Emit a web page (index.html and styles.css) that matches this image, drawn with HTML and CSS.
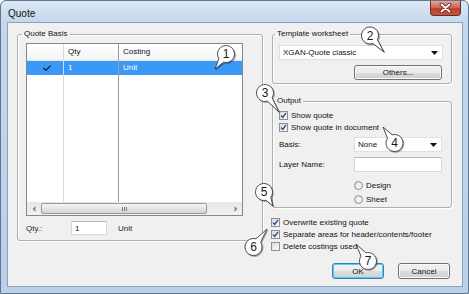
FILE: index.html
```html
<!DOCTYPE html>
<html lang="en">
<head>
    <meta charset="UTF-8">
    <title>Quote</title>
    <link rel="stylesheet" href="styles.css">
</head>
<body>
    <div class="window">
        <div class="titlebar">
            <span class="title">Quote</span>
            <div class="close">
                <svg width="13" height="10" viewBox="0 0 13 10">
                    <path d="M2.5 1.5 L10.5 8.5 M10.5 1.5 L2.5 8.5" stroke="#5a1e14" stroke-width="3.6" stroke-linecap="round"/>
                    <path d="M2.5 1.5 L10.5 8.5 M10.5 1.5 L2.5 8.5" stroke="#fff" stroke-width="2" stroke-linecap="round"/>
                </svg>
            </div>
        </div>

        <div class="client">
            <fieldset class="group basis">
                <legend>Quote Basis</legend>
                <div class="list">
                    <div class="cols">
                        <div class="col col0">
                            <div class="head"></div>
                            <div class="cell sel check-cell">
                                <svg width="8" height="6" viewBox="0 0 8 6"><path d="M0.5 3 L3 5.3 L7.5 0.6" fill="none" stroke="#111" stroke-width="1.1"/></svg>
                            </div>
                        </div>
                        <div class="col col1">
                            <div class="head">Qty</div>
                            <div class="cell sel">1</div>
                        </div>
                        <div class="col col2">
                            <div class="head">Costing</div>
                            <div class="cell sel">Unit</div>
                        </div>
                    </div>
                    <div class="hscroll">
                        <div class="arrow">
                            <svg width="4" height="6" viewBox="0 0 4 6"><path d="M3.5 0 L0.5 3 L3.5 6 Z" fill="#8a8a8a"/></svg>
                        </div>
                        <div class="thumb"><span class="grip"></span></div>
                        <div class="track"></div>
                        <div class="arrow">
                            <svg width="4" height="6" viewBox="0 0 4 6"><path d="M0.5 0 L3.5 3 L0.5 6 Z" fill="#8a8a8a"/></svg>
                        </div>
                    </div>
                </div>
                <div class="qty-row">
                    <span class="qty-label">Qty.:</span>
                    <input class="field qty-input" type="text" value="1">
                    <span class="qty-unit">Unit</span>
                </div>
            </fieldset>

            <div class="side">
                <fieldset class="group template">
                    <legend>Template worksheet</legend>
                    <div class="combo wide">
                        <span>XGAN-Quote classic</span>
                        <svg width="7" height="4" viewBox="0 0 7 4"><path d="M0 0 H7 L3.5 4 Z" fill="#111"/></svg>
                    </div>
                    <button class="btn others">Others...</button>
                </fieldset>

                <fieldset class="group output">
                    <legend>Output</legend>
                    <label class="check"><span class="box on"></span>Show quote</label>
                    <label class="check"><span class="box on"></span>Show quote in document</label>
                    <div class="form-row basis-row">
                        <span class="form-label">Basis:</span>
                        <div class="combo">
                            <span>None</span>
                            <svg width="7" height="4" viewBox="0 0 7 4"><path d="M0 0 H7 L3.5 4 Z" fill="#111"/></svg>
                        </div>
                    </div>
                    <div class="form-row layer-row">
                        <span class="form-label">Layer Name:</span>
                        <input class="field layer-input" type="text" value="">
                    </div>
                    <div class="radios">
                        <label class="radio"><span class="dot"></span>Design</label>
                        <label class="radio"><span class="dot"></span>Sheet</label>
                    </div>
                </fieldset>

                <div class="options">
                    <label class="check"><span class="box on"></span>Overwrite existing quote</label>
                    <label class="check"><span class="box on"></span>Separate areas for header/contents/footer</label>
                    <label class="check"><span class="box"></span>Delete costings used</label>
                </div>

                <div class="buttons">
                    <button class="btn default">OK</button>
                    <button class="btn">Cancel</button>
                </div>
            </div>
        </div>

        <!-- numbered callouts drawn over the dialog -->
        <svg class="callouts" width="469" height="294" viewBox="0 0 469 294">
            <g class="bubble">
                <path d="M218.9 58.7 A8.5 8.5 0 1 1 223.6 62.2 L215 69 Z"/>
                <text x="226" y="58.3">1</text>
            </g>
            <g class="bubble">
                <path d="M372.95 43.47 A8.5 8.5 0 1 1 377.38 39.71 L384 52 Z"/>
                <text x="370" y="39.8">2</text>
            </g>
            <g class="bubble">
                <path d="M267.4 101.15 A8.5 8.5 0 1 1 272.08 97.7 L279 112 Z"/>
                <text x="265" y="97.3">3</text>
            </g>
            <g class="bubble">
                <path d="M392.2 134.82 A8.5 8.5 0 1 1 387.48 138.21 L383 127 Z"/>
                <text x="394.5" y="147.3">4</text>
            </g>
            <g class="bubble">
                <path d="M265.87 200.29 A8.5 8.5 0 1 1 270.76 197.15 L273 206 Z"/>
                <text x="264" y="196.3">5</text>
            </g>
            <g class="bubble">
                <path d="M260.62 242.36 A8.5 8.5 0 1 1 255.97 238.87 L267 229 Z"/>
                <text x="253.5" y="251.3">6</text>
            </g>
            <g class="bubble">
                <path d="M365.77 252.8 A8.5 8.5 0 1 1 361.02 256.15 L356 244 Z"/>
                <text x="368" y="265.3">7</text>
            </g>
        </svg>
    </div>
</body>
</html>
```

FILE: styles.css
```css
body {
    margin: 0;
    font-family: "Liberation Sans", Arial, sans-serif;
    font-size: 8px;
    color: #111;
}
.window {
    position: relative;
    width: 469px;
    height: 294px;
    box-sizing: border-box;
    border: 1px solid #61768f;
    border-radius: 6px 6px 0 0;
    background: linear-gradient(#dbe7f4, #c4d7ed 22px, #bad0e9);
    padding: 0 5px 6px 6px;
    display: flex;
    flex-direction: column;
}
.titlebar {
    height: 21px;
    display: flex;
    align-items: flex-start;
    padding-left: 1px;
}
.title {
    font-size: 10px;
    line-height: 12px;
    margin-top: 7px;
    color: #111;
}
.close {
    margin-left: auto;
    margin-right: 2px;
    width: 31px;
    height: 15px;
    box-sizing: border-box;
    border: 1px solid #6e2a20;
    border-top: none;
    border-radius: 0 0 4px 4px;
    background: linear-gradient(#e3a396, #cf6a56 45%, #b8402b 55%, #c9553f);
    display: flex;
    align-items: center;
    justify-content: center;
}

.client {
    flex: 1;
    border: 1px solid #8aa0bd;
    background: #f0f0f0;
    display: grid;
    grid-template-columns: 246px 180px;
    column-gap: 9px;
    align-items: start;
    padding: 6px 0 0 9px;
}

/* group boxes */
.group {
    margin: 0;
    min-width: 0;
    box-sizing: border-box;
    border: 1px solid #a9afb6;
    border-radius: 3px;
    box-shadow: 1px 1px 0 #fff, inset 1px 1px 0 #fff;
}
.group legend {
    padding: 0 2px;
    margin-left: -4px;
    line-height: 10px;
    font-size: 8px;
}
.basis {
    height: 212px;
    padding: 4px 8px 0 8px;
}
.template {
    height: 55px;
    padding: 6px 8px 0 6px;
    display: flex;
    flex-direction: column;
}
.output {
    height: 112px;
    margin-top: 12px;
    padding: 3px 8px 0 6px;
}

/* list view */
.list {
    width: 217px;
    height: 173px;
    box-sizing: border-box;
    border: 1px solid #828790;
    background: #fff;
    display: flex;
    flex-direction: column;
}
.cols {
    flex: 1;
    display: flex;
}
.col {
    display: flex;
    flex-direction: column;
}
.col0 {
    width: 36px;
    border-right: 1px solid #d9d9d9;
}
.col1 {
    width: 54px;
    border-right: 1px solid #9d9d9d;
}
.col2 {
    flex: 1;
}
.head {
    height: 16px;
    line-height: 16px;
    padding-left: 4px;
    background: linear-gradient(#ffffff, #f3f4f6);
    border-bottom: 1px solid #e6e6e6;
}
.cell {
    height: 14px;
    line-height: 14px;
    padding-left: 4px;
}
.sel {
    background: #3a99f7;
    color: #fff;
}
.check-cell {
    padding-left: 16px;
    display: flex;
    align-items: center;
}
.hscroll {
    height: 13px;
    display: flex;
    background: linear-gradient(#e6e6e6, #f2f2f2);
}
.arrow {
    width: 13px;
    display: flex;
    align-items: center;
    justify-content: center;
}
.thumb {
    width: 166px;
    box-sizing: border-box;
    margin: 1px 0 1px 1px;
    border: 1px solid #979797;
    border-radius: 2px;
    background: linear-gradient(#f6f6f6, #e4e4e4 50%, #d6d6d6);
    display: flex;
    align-items: center;
    justify-content: center;
}
.grip {
    width: 5px;
    height: 4px;
    background: repeating-linear-gradient(90deg, #7a7a7a 0 1px, transparent 1px 2px);
}
.track {
    flex: 1;
}
.qty-row {
    margin-top: 5px;
    height: 14px;
    display: flex;
    align-items: center;
}
.qty-label {
    width: 45px;
    color: #1b1b3a;
}
.field {
    box-sizing: border-box;
    margin: 0;
    border: 1px solid #d4d8de;
    border-top-color: #b5bac1;
    background: #fff;
    font: inherit;
    color: #111;
    padding: 0 3px;
}
.qty-input {
    width: 36px;
    height: 14px;
}
.qty-unit {
    margin-left: 11px;
    color: #1b1b3a;
}

/* right side */
.side {
    display: flex;
    flex-direction: column;
}
.combo {
    height: 15px;
    box-sizing: border-box;
    border: 1px solid #dde1e6;
    background: #fff;
    display: flex;
    align-items: center;
    justify-content: space-between;
    padding: 0 4px 0 3px;
}
.combo.wide {
    width: 164px;
}
.btn {
    height: 15px;
    box-sizing: border-box;
    margin: 0;
    padding: 0;
    border: 1px solid #707070;
    border-radius: 3px;
    background: linear-gradient(#f2f2f2, #ebebeb 50%, #dddddd 51%, #cfcfcf);
    box-shadow: inset 0 0 0 1px #fbfbfb;
    font: inherit;
    color: #111;
}
.others {
    width: 88px;
    margin-top: 5px;
    align-self: flex-end;
    margin-right: 1px;
}
.check {
    height: 12px;
    display: flex;
    align-items: center;
    gap: 3px;
}
.box {
    width: 9px;
    height: 9px;
    box-sizing: border-box;
    border: 1px solid #8e8f8f;
    background: linear-gradient(135deg, #dcdcdc, #fbfbfb);
}
.box.on {
    background:
        url("data:image/svg+xml,%3Csvg xmlns='http://www.w3.org/2000/svg' width='7' height='7' viewBox='0 0 7 7'%3E%3Cpath d='M1 3.5 L2.8 5.5 L6 1' fill='none' stroke='%23304f96' stroke-width='1.4'/%3E%3C/svg%3E") center / 7px 7px no-repeat,
        linear-gradient(135deg, #dcdcdc, #fbfbfb);
}
.form-row {
    display: flex;
    align-items: center;
}
.form-label {
    width: 75px;
}
.basis-row {
    margin-top: 4px;
}
.basis-row .combo {
    width: 88px;
}
.layer-row {
    margin-top: 5px;
}
.layer-input {
    width: 88px;
    height: 15px;
}
.radios {
    margin: 7px 0 0 75px;
    display: flex;
    flex-direction: column;
    gap: 2px;
}
.radio {
    height: 12px;
    display: flex;
    align-items: center;
    gap: 3px;
}
.dot {
    width: 9px;
    height: 9px;
    box-sizing: border-box;
    border: 1px solid #8e8f8f;
    border-radius: 50%;
    background: radial-gradient(circle at 60% 60%, #fafafa, #d8d8d8);
}
.options {
    margin-top: 8px;
    margin-left: -1px;
}
.buttons {
    margin-top: 11px;
    display: flex;
    justify-content: flex-end;
    gap: 14px;
    padding-right: 2px;
}
.buttons .btn {
    width: 52px;
    height: 16px;
}
.btn.default {
    border-color: #3c7fb1;
    box-shadow: inset 0 0 0 1px #48d0f8;
}

/* callouts */
.callouts {
    position: absolute;
    left: -1px;
    top: -1px;
    pointer-events: none;
}
.bubble path {
    fill: #fff;
    stroke: #3b3b3b;
    stroke-width: 0.9;
    filter: drop-shadow(1px 1px 0.6px rgba(0, 0, 0, 0.3));
}
.bubble text {
    font-family: "Liberation Sans", Arial, sans-serif;
    font-size: 12px;
    fill: #1a1a1a;
    text-anchor: middle;
}
```
